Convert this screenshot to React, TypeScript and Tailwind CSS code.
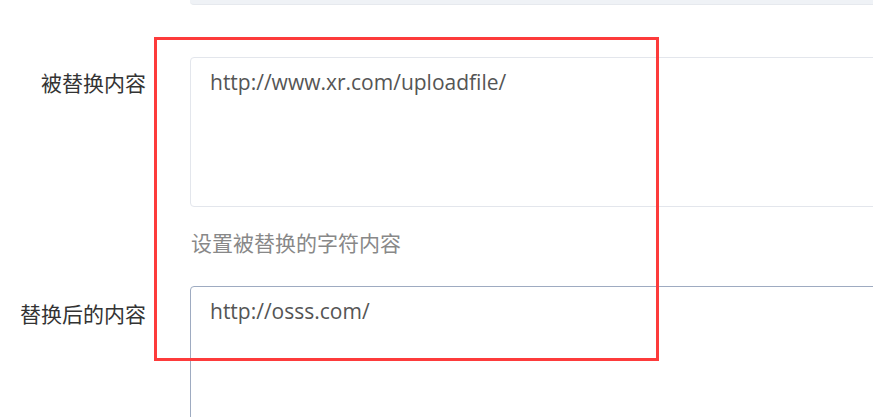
export default function App() {
  return (
    <div className="relative h-[417px] w-[873px] overflow-hidden bg-white">
      {/* previous field, only its bottom edge shows */}
      <div className="ml-[190px] h-[5px] w-[760px] rounded-b-[4px] border-b border-[#e6e9ee] bg-[#eff2f6]" />

      <div className="mt-[52px] flex items-start">
        <label className="w-[190px] shrink-0 pr-[44px] pt-[10px] text-right font-['Noto_Sans_CJK_SC',sans-serif] text-[21px] leading-[30px] text-[#333]">
          被替换内容
        </label>
        <div className="flex shrink-0 flex-col">
          <div className="h-[150px] w-[760px] rounded-[4px] border border-[#e3e6ec] px-[19px] pt-[9px] font-['Open_Sans',sans-serif] text-[21px] leading-[30px] text-[#555]">
            http://www.xr.com/uploadfile/
          </div>
          <p className="mt-[20px] pl-[1px] font-['Noto_Sans_CJK_SC',sans-serif] text-[21px] leading-[30px] text-[#888]">
            设置被替换的字符内容
          </p>
        </div>
      </div>

      <div className="mt-[29px] flex items-start">
        <label className="w-[190px] shrink-0 pr-[44px] pt-[12px] text-right font-['Noto_Sans_CJK_SC',sans-serif] text-[21px] leading-[30px] text-[#333]">
          替换后的内容
        </label>
        <div className="h-[150px] w-[760px] shrink-0 rounded-[4px] border border-[#9eabc1] px-[19px] pt-[9px] font-['Open_Sans',sans-serif] text-[21px] leading-[30px] text-[#555]">
          http://osss.com/
        </div>
      </div>

      {/* annotation box */}
      <div className="absolute left-[154px] top-[37px] h-[324px] w-[505px] border-[3px] border-[#fd3b3b]" />
    </div>
  );
}
